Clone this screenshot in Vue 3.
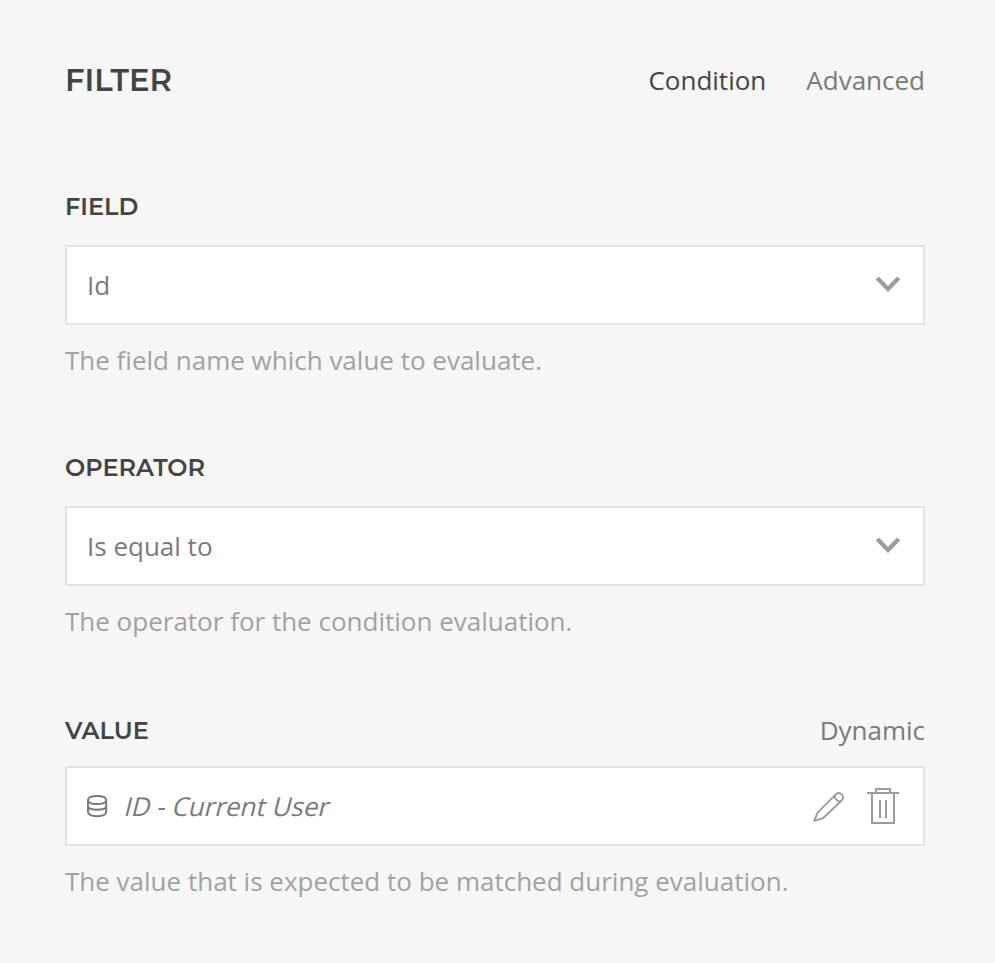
<script setup>
import { ref } from 'vue'
const tabs = ['Condition', 'Advanced']
const active = ref('Condition')
const fields = [
  { key: 'field', label: 'FIELD', value: 'Id', hint: 'The field name which value to evaluate.' },
  { key: 'operator', label: 'OPERATOR', value: 'Is equal to', hint: 'The operator for the condition evaluation.' },
]
</script>

<template>
  <main class="panel">
    <header class="head">
      <h1>FILTER</h1>
      <nav class="tabs">
        <a v-for="t in tabs" :key="t" :class="['tab', { active: t === active }]" @click="active = t">{{ t }}</a>
      </nav>
    </header>
    <section v-for="f in fields" :key="f.key" :class="['group', f.key]">
      <div class="label-row"><h2>{{ f.label }}</h2></div>
      <div class="box select">
        <span class="text">{{ f.value }}</span>
        <svg class="chevron" width="26" height="18" viewBox="0 0 26 18"><path d="M2.3 2 L13 13 L23.7 2" /></svg>
      </div>
      <p class="hint">{{ f.hint }}</p>
    </section>
    <section class="group value">
      <div class="label-row"><h2>VALUE</h2><span class="mode">Dynamic</span></div>
      <div class="box">
        <svg class="db" width="22" height="24" viewBox="0 0 22 24"><path d="M1 6.2C1 3.4 4.2 2 10.1 2s9.1 1.4 9.1 4.2-3.2 3.8-9.1 3.8S1 9 1 6.2V17.8C1 20.8 4.2 22.2 10.1 22.2s9.1-1.4 9.1-4.4V6.2M1 12c0 2.6 3.2 3.7 9.1 3.7s9.1-1.1 9.1-3.7" /></svg>
        <span class="text"><span class="slanted">ID - Current User</span></span>
        <svg class="pencil" width="32" height="32" viewBox="0 0 32 32"><path d="M1.2 30.8 4.6 22.6 23.1 4.2a4.2 4.2 0 0 1 6 5.8L10 28.2ZM21.7 5.6q.3 5 5.6 6" /></svg>
        <svg class="trash" width="32" height="38" viewBox="0 0 32 38"><path d="M0 6h32M9 6V2h14v4M5 6v30h22V6M13 13v18M19 13v18" /></svg>
      </div>
      <p class="hint">The value that is expected to be matched during evaluation.</p>
    </section>
  </main>
</template>

<style>
body { margin: 0; background: #f6f6f6; }
</style>
<style scoped>
.panel { box-sizing: border-box; height: 963px; padding: 60px 70px 0 65px; background: #f6f6f6; font-family: "Open Sans", sans-serif; font-size: 26px; color: #7a7a7a; }
.head, .label-row { display: flex; align-items: center; justify-content: space-between; }
.head { height: 40px; }
h1, h2, p { margin: 0; }
h1, h2 { font-family: Montserrat, "Open Sans", sans-serif; color: #444; white-space: nowrap; }
h1 { font-size: 30.7px; line-height: 40px; font-weight: 600; }
h2 { font-size: 24px; line-height: 36px; font-weight: 600; }
.tabs { display: flex; gap: 40px; line-height: 40px; }
.tab.active { color: #444; }
.label-row { height: 36px; }
.group.field { margin-top: 89px; }
.group.operator { margin-top: 72px; }
.group.value { margin-top: 74px; }
.mode { line-height: 36px; padding-bottom: 2px; }
.box { box-sizing: border-box; height: 80px; margin-top: 20px; padding: 0 24px 0 20px; display: flex; align-items: center; background: #fff; border: 2px solid #e4e4e4; }
.box.select { padding-right: 22px; }
.value .box { margin-top: 17px; }
.text { flex: 1; white-space: nowrap; }
.slanted { display: inline-block; transform: skewX(-14deg); transform-origin: 0 77%; }
.hint { margin-top: 17px; line-height: 36px; color: #a2a2a2; white-space: nowrap; }
svg { fill: none; stroke: #9c9c9c; stroke-width: 2; flex: none; }
.chevron { stroke-width: 4.2; }
.db { stroke: #7a7a7a; margin-right: 14px; }
.pencil { stroke-width: 1.9; stroke-linejoin: round; margin-right: 22px; }
</style>
